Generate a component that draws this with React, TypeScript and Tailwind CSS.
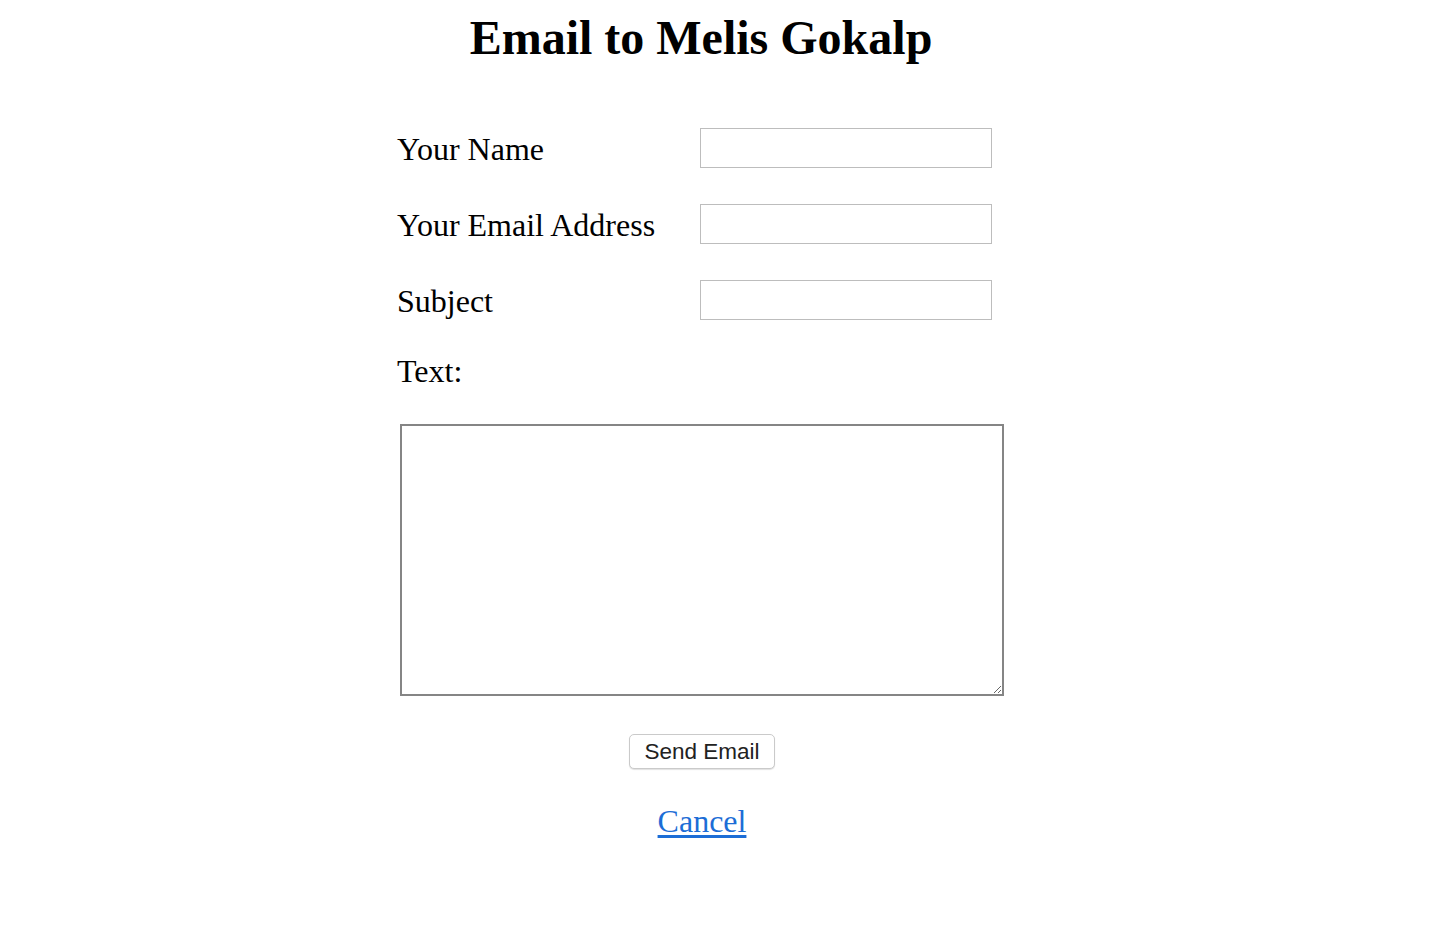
import React from 'react';

const serif = "font-['Liberation_Serif','Times_New_Roman',serif]";

const fields = ['Your Name', 'Your Email Address', 'Subject'];

export default function App() {
  return (
    <div className={`w-[1402px] bg-white text-black ${serif}`}>
      <h1 className="pt-[10px] text-center text-[48px] font-bold leading-[55px]">Email to Melis Gokalp</h1>

      <form className="mx-auto mt-[63px] w-[608px]" onSubmit={(e) => e.preventDefault()}>
        <div className="flex flex-col gap-[36px]">
          {fields.map((label) => (
            <div key={label} className="flex items-center">
              <label className="w-[303px] pt-[2px] text-[32px] leading-[36px]">{label}</label>
              <input
                type="text"
                className="h-[40px] w-[292px] border border-[#bdbdbd] bg-white px-2 text-[20px] outline-none"
              />
            </div>
          ))}
        </div>

        <div className="mt-[33px] text-[32px] leading-[36px]">Text:</div>

        <textarea className="ml-[3px] mt-[35px] block h-[272px] w-[604px] border-2 border-[#858585] bg-white p-1 text-[20px] outline-none" />

        <div className="mt-[38px] flex justify-center pl-[2px]">
          <button
            type="submit"
            className="h-[35px] w-[146px] rounded-[5px] border border-[#cacaca] bg-white font-['Liberation_Sans',Arial,sans-serif] text-[22.5px] text-[#222] shadow-[0_1px_1px_rgba(0,0,0,0.12)]"
          >
            Send Email
          </button>
        </div>

        <div className="mt-[34px] text-center pl-[2px]">
          <a href="#" className="text-[32px] leading-[36px] text-[#1c6dd6] underline underline-offset-[3px]">
            Cancel
          </a>
        </div>
      </form>
    </div>
  );
}
